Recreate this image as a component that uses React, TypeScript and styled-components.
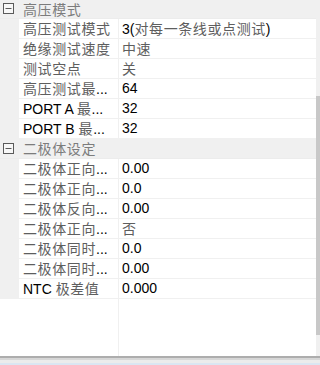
import React from "react";
import styled, { createGlobalStyle } from "styled-components";

const Global = createGlobalStyle`
  html, body { margin: 0; padding: 0; background: #ffffff; }
  body { font-family: "Liberation Sans", "Noto Sans CJK SC", sans-serif; }
`;

const Page = styled.div`
  width: 320px;
  height: 365px;
  display: flex;
  flex-direction: column;
  overflow: hidden;
  background: #ffffff;
`;

const Body = styled.div`
  display: flex;
  height: 356px;
`;

const Table = styled.div`
  flex: 1;
  display: flex;
  flex-direction: column;
  min-width: 0;
`;

const Row = styled.div`
  display: grid;
  grid-template-columns: 19px 100px 1fr;
  height: 20px;
  box-sizing: border-box;
  border-bottom: 1px solid #f0f0f0;
  font-size: 14px;
  line-height: 19px;
  color: #000000;
`;

const Gutter = styled.div`
  background: #f0f0f0;
`;

const NameCell = styled.div`
  box-sizing: border-box;
  border-right: 1px solid #f0f0f0;
  padding-left: 4px;
  white-space: nowrap;
  overflow: hidden;
`;

const ValueCell = styled.div`
  padding-left: 3px;
  white-space: nowrap;
  overflow: hidden;
`;

const CategoryRow = styled.div<{ $first?: boolean }>`
  display: flex;
  align-items: center;
  height: ${(p) => (p.$first ? 19 : 20)}px;
  box-sizing: border-box;
  background: #f0f0f0;
  border-bottom: 1px solid #ececec;
  position: relative;
`;

const Toggle = styled.svg<{ $first?: boolean }>`
  position: absolute;
  left: 3px;
  top: ${(p) => (p.$first ? 3 : 4)}px;
  width: 11px;
  height: 11px;
`;

const CategoryTitle = styled.div`
  margin-left: 23px;
  font-size: 14px;
  letter-spacing: 0.6px;
  font-family: "Noto Sans CJK SC", sans-serif;
  color: #7c7c7c;
  line-height: 19px;
`;

const Cjk = styled.span`
  font-family: "Noto Sans CJK SC", sans-serif;
  font-size: 14px;
  letter-spacing: 0.6px;
  color: #5e5e5e;
`;

const Filler = styled.div`
  flex: 1;
  display: grid;
  grid-template-columns: 119px 1fr;
`;

const FillerLeft = styled.div`
  box-sizing: border-box;
  border-right: 1px solid #f0f0f0;
`;

const Scrollbar = styled.div`
  width: 4px;
  background: #f0f0f0;
  display: flex;
  flex-direction: column;
  padding-top: 96px;
  box-sizing: border-box;
`;

const Thumb = styled.div`
  height: 239px;
  background: #c8c8c8;
`;

const BottomEdge = styled.div`
  height: 9px;
  background: linear-gradient(
    to bottom,
    #adadad 0px,
    #adadad 2px,
    #d6d6d6 2px,
    #d6d6d6 4px,
    #ececec 4px,
    #ececec 7px,
    #dbe6f2 7px,
    #dbe6f2 9px
  );
`;

const cjkRe = /([\u3000-\u9fff\uff00-\uffef]+)/;

function Txt({ s }: { s: string }) {
  const parts = s.split(cjkRe).filter((p) => p.length > 0);
  return (
    <>
      {parts.map((p, i) =>
        cjkRe.test(p) ? <Cjk key={i}>{p}</Cjk> : <React.Fragment key={i}>{p}</React.Fragment>
      )}
    </>
  );
}

function ToggleIcon({ first }: { first?: boolean }) {
  return (
    <Toggle $first={first} viewBox="0 0 11 11">
      <rect x="0.5" y="0.5" width="10" height="10" fill="#f7f7f7" stroke="#5a5a5a" strokeWidth="1" />
      <line x1="2.5" y1="5.5" x2="8.5" y2="5.5" stroke="#5a5a5a" strokeWidth="1" />
    </Toggle>
  );
}

type Item = { name: string; value: string };
type Group = { title: string; items: Item[] };

const groups: Group[] = [
  {
    title: "高压模式",
    items: [
      { name: "高压测试模式", value: "3(对每一条线或点测试)" },
      { name: "绝缘测试速度", value: "中速" },
      { name: "测试空点", value: "关" },
      { name: "高压测试最...", value: "64" },
      { name: "PORT A 最...", value: "32" },
      { name: "PORT B 最...", value: "32" },
    ],
  },
  {
    title: "二极体设定",
    items: [
      { name: "二极体正向...", value: "0.00" },
      { name: "二极体正向...", value: "0.0" },
      { name: "二极体反向...", value: "0.00" },
      { name: "二极体正向...", value: "否" },
      { name: "二极体同时...", value: "0.0" },
      { name: "二极体同时...", value: "0.00" },
      { name: "NTC 极差值", value: "0.000" },
    ],
  },
];

export default function App() {
  return (
    <Page>
      <Global />
      <Body>
        <Table>
          {groups.map((g, gi) => (
            <React.Fragment key={gi}>
              <CategoryRow $first={gi === 0}>
                <ToggleIcon first={gi === 0} />
                <CategoryTitle>{g.title}</CategoryTitle>
              </CategoryRow>
              {g.items.map((it, ii) => (
                <Row key={ii}>
                  <Gutter />
                  <NameCell>
                    <Txt s={it.name} />
                  </NameCell>
                  <ValueCell>
                    <Txt s={it.value} />
                  </ValueCell>
                </Row>
              ))}
            </React.Fragment>
          ))}
          <Filler>
            <FillerLeft />
            <div />
          </Filler>
        </Table>
        <Scrollbar>
          <Thumb />
        </Scrollbar>
      </Body>
      <BottomEdge />
    </Page>
  );
}
